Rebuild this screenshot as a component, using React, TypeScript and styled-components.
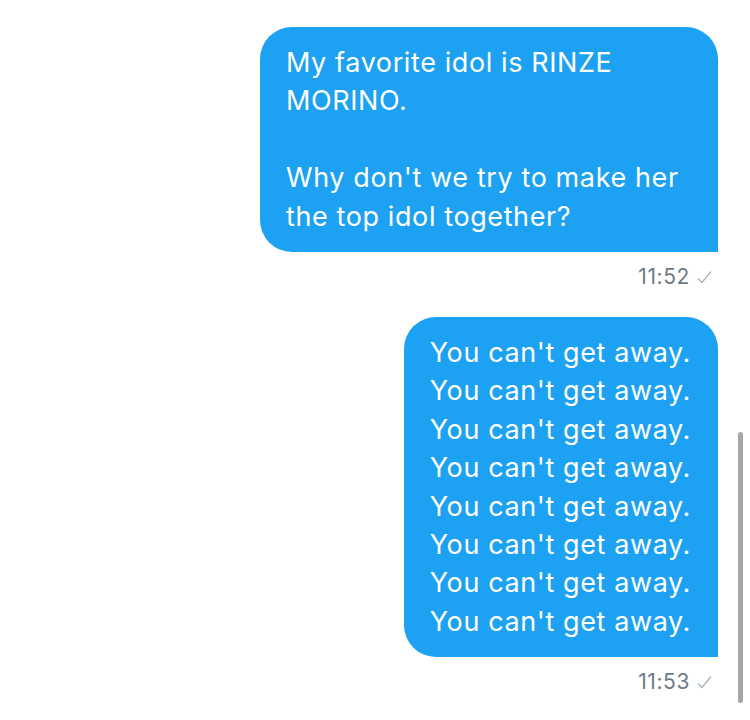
import styled, { createGlobalStyle } from "styled-components";

const GlobalStyle = createGlobalStyle`
  html, body {
    margin: 0;
    background: #ffffff;
  }
  body {
    font-family: Inter, "Noto Sans", sans-serif;
    -webkit-font-smoothing: antialiased;
  }
`;

const Screen = styled.div`
  position: relative;
  width: 750px;
  height: 720px;
  overflow: hidden;
  background: #ffffff;
`;

const Thread = styled.div`
  display: flex;
  flex-direction: column;
  align-items: flex-end;
  padding: 27px 32px 0 0;
`;

const Message = styled.div`
  display: flex;
  flex-direction: column;
  align-items: flex-end;
  margin-bottom: 28px;
`;

const Bubble = styled.div<{ $maxWidth: number }>`
  box-sizing: border-box;
  max-width: ${(p) => p.$maxWidth}px;
  padding: 17px 27px 16px 26px;
  background: #1da1f2;
  color: #ffffff;
  font-size: 27px;
  line-height: 38.4px;
  letter-spacing: 0.6px;
  border-radius: 32px 32px 0 32px;
  white-space: pre-line;
`;

const Meta = styled.div`
  display: flex;
  align-items: center;
  gap: 7px;
  margin-top: 13px;
  margin-right: 6px;
  color: #6e7a86;
  font-size: 21px;
  line-height: 24px;
  letter-spacing: 0.6px;
`;

const Check = styled.svg`
  width: 15px;
  height: 14px;
  stroke: #a9b4bd;
  fill: none;
  stroke-width: 1.4;
`;

const Scrollbar = styled.div`
  position: absolute;
  right: 7px;
  top: 432px;
  width: 5px;
  height: 271px;
  border-radius: 3px;
  background: #a6a6a6;
`;

const messages = [
  {
    text: "My favorite idol is RINZE MORINO.\n\nWhy don't we try to make her the top idol together?",
    time: "11:52",
    width: 458,
  },
  {
    text: Array(8).fill("You can't get away.").join("\n"),
    time: "11:53",
    width: 458,
  },
];

const App = () => {
  return (
    <>
      <GlobalStyle />
      <Screen>
        <Thread>
          {messages.map((m) => (
            <Message key={m.time}>
              <Bubble $maxWidth={m.width}>{m.text}</Bubble>
              <Meta>
                {m.time}
                <Check viewBox="0 0 15 14">
                  <path d="M1 8.5 L5 12.5 L14 1.5" />
                </Check>
              </Meta>
            </Message>
          ))}
        </Thread>
        <Scrollbar />
      </Screen>
    </>
  );
};

export default App;
